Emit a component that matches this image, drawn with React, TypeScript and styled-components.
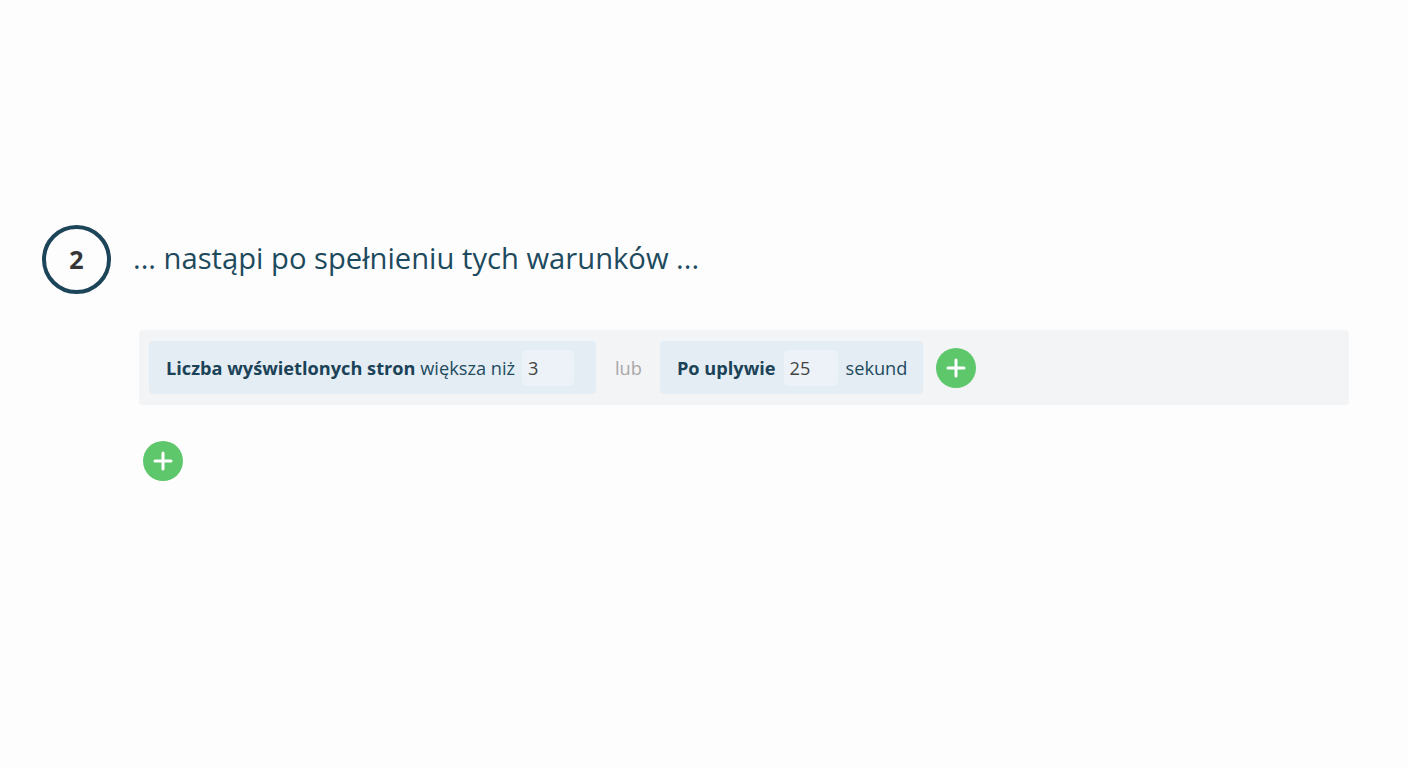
import styled, { createGlobalStyle } from 'styled-components';

const GlobalStyle = createGlobalStyle`
  html, body {
    margin: 0;
    padding: 0;
    background: #fdfdfd;
    font-family: 'Open Sans', 'Liberation Sans', sans-serif;
  }
`;

const Page = styled.div`
  box-sizing: border-box;
  width: 1408px;
  height: 768px;
  padding: 225px 59px 0 42px;
  display: flex;
  flex-direction: column;
`;

const StepHeader = styled.div`
  display: flex;
  align-items: center;
  gap: 22px;
`;

const StepNumber = styled.div`
  box-sizing: border-box;
  width: 69px;
  height: 69px;
  border-radius: 50%;
  border: 4px solid #1d4559;
  display: flex;
  align-items: center;
  justify-content: center;
  font-size: 25px;
  font-weight: 700;
  color: #363636;
  padding-bottom: 2px;
`;

const StepTitle = styled.h2`
  margin: -4px 0 0;
  font-size: 29.2px;
  font-weight: 400;
  color: #1e4a5e;
`;

const Body = styled.div`
  padding-left: 97px;
  display: flex;
  flex-direction: column;
  align-items: flex-start;
  gap: 36px;
  margin-top: 36px;
`;

const ConditionGroup = styled.div`
  box-sizing: border-box;
  width: 1210px;
  height: 75px;
  background: #f3f4f5;
  border-radius: 4px;
  padding: 0 10px;
  display: flex;
  align-items: center;
`;

const Chip = styled.div<{ $padRight: number; $gap: number }>`
  box-sizing: border-box;
  height: 53px;
  padding: 0 ${p => p.$padRight}px 0 17px;
  background: #e4edf4;
  border-radius: 4px;
  display: flex;
  align-items: center;
  gap: ${p => p.$gap}px;
  font-size: 18.2px;
  color: #1e4a5e;
`;

const Label = styled.strong`
  font-weight: 700;
  color: #1b4257;
`;

const ValueInput = styled.input<{ $w: number }>`
  box-sizing: border-box;
  width: ${p => p.$w}px;
  height: 36px;
  border: none;
  border-radius: 4px;
  background: #ecf2f7;
  padding: 0 6px;
  font-family: inherit;
  font-size: 18.2px;
  color: #444;
  outline: none;
`;

const Joiner = styled.span`
  font-size: 18.2px;
  color: #a8a8a8;
  padding: 0 18px 0 19px;
`;

const AddButton = styled.button<{ $offset?: number }>`
  width: 40px;
  height: 40px;
  margin-left: ${p => p.$offset ?? 0}px;
  border-radius: 50%;
  border: none;
  background: #5ec76c;
  padding: 0;
  display: flex;
  align-items: center;
  justify-content: center;
  cursor: pointer;
  flex-shrink: 0;
`;

const PlusIcon = () => (
  <svg width="20" height="20" viewBox="0 0 20 20">
    <path d="M10 2v16M2 10h16" stroke="#fff" strokeWidth="3" strokeLinecap="round" />
  </svg>
);

const App = () => {
  return (
    <Page>
      <GlobalStyle />
      <StepHeader>
        <StepNumber>2</StepNumber>
        <StepTitle>... nastąpi po spełnieniu tych warunków ...</StepTitle>
      </StepHeader>
      <Body>
        <ConditionGroup>
          <Chip $padRight={22} $gap={7}>
            <span>
              <Label>Liczba wyświetlonych stron</Label> większa niż
            </span>
            <ValueInput $w={52} defaultValue="3" />
          </Chip>
          <Joiner>lub</Joiner>
          <Chip $padRight={16} $gap={8}>
            <Label>Po uplywie</Label>
            <ValueInput $w={54} defaultValue="25" />
            <span>sekund</span>
          </Chip>
          <AddButton aria-label="Dodaj warunek" $offset={13}>
            <PlusIcon />
          </AddButton>
        </ConditionGroup>
        <AddButton aria-label="Dodaj grupę" $offset={4}>
          <PlusIcon />
        </AddButton>
      </Body>
    </Page>
  );
};

export default App;
